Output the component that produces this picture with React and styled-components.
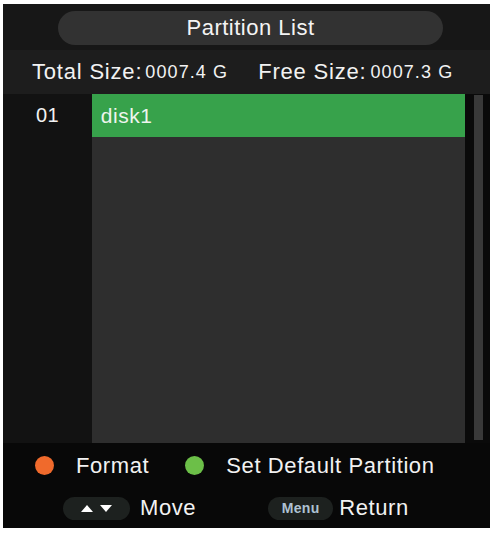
import React from 'react';
import styled, { createGlobalStyle } from 'styled-components';

const GlobalStyle = createGlobalStyle`
    body {
        margin: 0;
        background: #ffffff;
        font-family: 'Liberation Sans', Arial, sans-serif;
    }
`;

const Screen = styled.div`
    width: 487px;
    height: 524px;
    margin: 4px 0 0 3px;
    display: flex;
    flex-direction: column;
    background-color: #0a0a0a;
    color: #f2f2f2;
`;

const Header = styled.div`
    height: 44px;
    display: flex;
    align-items: center;
    justify-content: center;
    background-color: #171717;
    padding: 2px 0 0 8px;
`;

const TitlePill = styled.div`
    width: 385px;
    height: 34px;
    border-radius: 17px;
    background-color: #323232;
    display: flex;
    align-items: center;
    justify-content: center;
    font-size: 22px;
    letter-spacing: 0.5px;
    color: #f4f4f4;
`;

const SizeRow = styled.div`
    height: 44px;
    display: flex;
    align-items: center;
    padding-left: 29px;
    background-color: #1d1d1d;
    font-size: 22px;
    letter-spacing: 0.8px;
    white-space: nowrap;
`;

const Label = styled.span`
    margin-left: ${p => p.$gap || 0}px;
`;

const Value = styled.span`
    font-size: 18px;
    letter-spacing: 1.1px;
    margin-left: ${p => p.$gap || 0}px;
`;

const ListArea = styled.div`
    flex: 1;
    display: flex;
    min-height: 0;
`;

const IndexCol = styled.div`
    width: 89px;
    background-color: #121212;
    display: flex;
    flex-direction: column;
`;

const IndexCell = styled.div`
    height: 43px;
    display: flex;
    align-items: center;
    padding-left: 33px;
    font-size: 20px;
    letter-spacing: 0.5px;
`;

const Panel = styled.div`
    width: 374px;
    background-color: #2e2e2e;
    display: flex;
    flex-direction: column;
`;

const Entry = styled.div`
    height: 43px;
    display: flex;
    align-items: center;
    padding-left: 9px;
    font-size: 21px;
    letter-spacing: 0.5px;
    background-color: ${p => (p.$active ? '#37a24b' : 'transparent')};
    color: #eef5ee;
`;

const Gutter = styled.div`
    width: 24px;
    display: flex;
    justify-content: center;
    padding: 1px 0 3px 1px;
`;

const Track = styled.div`
    width: 9px;
    background-color: #393939;
`;

const Footer = styled.div`
    height: 85px;
    display: flex;
    flex-direction: column;
    background-color: #080808;
`;

const HintRow = styled.div`
    height: ${p => p.$h}px;
    display: flex;
    align-items: center;
    padding-left: ${p => p.$pad}px;
    font-size: 22px;
    letter-spacing: 0.6px;
    white-space: nowrap;
`;

const Dot = styled.span`
    width: 19px;
    height: 19px;
    border-radius: 50%;
    background-color: ${p => p.$color};
    margin-left: ${p => p.$gap || 0}px;
    margin-right: 22px;
    flex-shrink: 0;
`;

const KeyPill = styled.span`
    width: ${p => p.$w}px;
    height: 23px;
    border-radius: 12px;
    background-color: #1d211f;
    display: inline-flex;
    align-items: center;
    justify-content: center;
    gap: 7px;
    margin-left: ${p => p.$gap || 0}px;
    margin-right: ${p => p.$after}px;
    flex-shrink: 0;
`;

const KeyText = styled.span`
    font-size: 14px;
    font-weight: 600;
    color: #aec1d2;
    letter-spacing: 0.3px;
`;

function Arrow({ down }) {
    return (
        <svg width="12" height="7" viewBox="0 0 12 7">
            <polygon
                points={down ? '0,0 12,0 6,7' : '6,0 12,7 0,7'}
                fill="#ffffff"
            />
        </svg>
    );
}

export default function App() {
    return (
        <>
            <GlobalStyle />
            <Screen>
                <Header>
                    <TitlePill>Partition List</TitlePill>
                </Header>
                <SizeRow>
                    <Label>Total Size:</Label>
                    <Value $gap={3}>0007.4 G</Value>
                    <Label $gap={30}>Free Size:</Label>
                    <Value $gap={4}>0007.3 G</Value>
                </SizeRow>
                <ListArea>
                    <IndexCol>
                        <IndexCell>01</IndexCell>
                    </IndexCol>
                    <Panel>
                        <Entry $active>disk1</Entry>
                    </Panel>
                    <Gutter>
                        <Track />
                    </Gutter>
                </ListArea>
                <Footer>
                    <HintRow $h={45} $pad={32}>
                        <Dot $color="#f06a2c" />
                        <span>Format</span>
                        <Dot $color="#6cbf48" $gap={36} />
                        <span>Set Default Partition</span>
                    </HintRow>
                    <HintRow $h={40} $pad={60}>
                        <KeyPill $w={67} $after={10}>
                            <Arrow />
                            <Arrow down />
                        </KeyPill>
                        <span>Move</span>
                        <KeyPill $w={65} $after={6} $gap={72}>
                            <KeyText>Menu</KeyText>
                        </KeyPill>
                        <span>Return</span>
                    </HintRow>
                </Footer>
            </Screen>
        </>
    );
}
